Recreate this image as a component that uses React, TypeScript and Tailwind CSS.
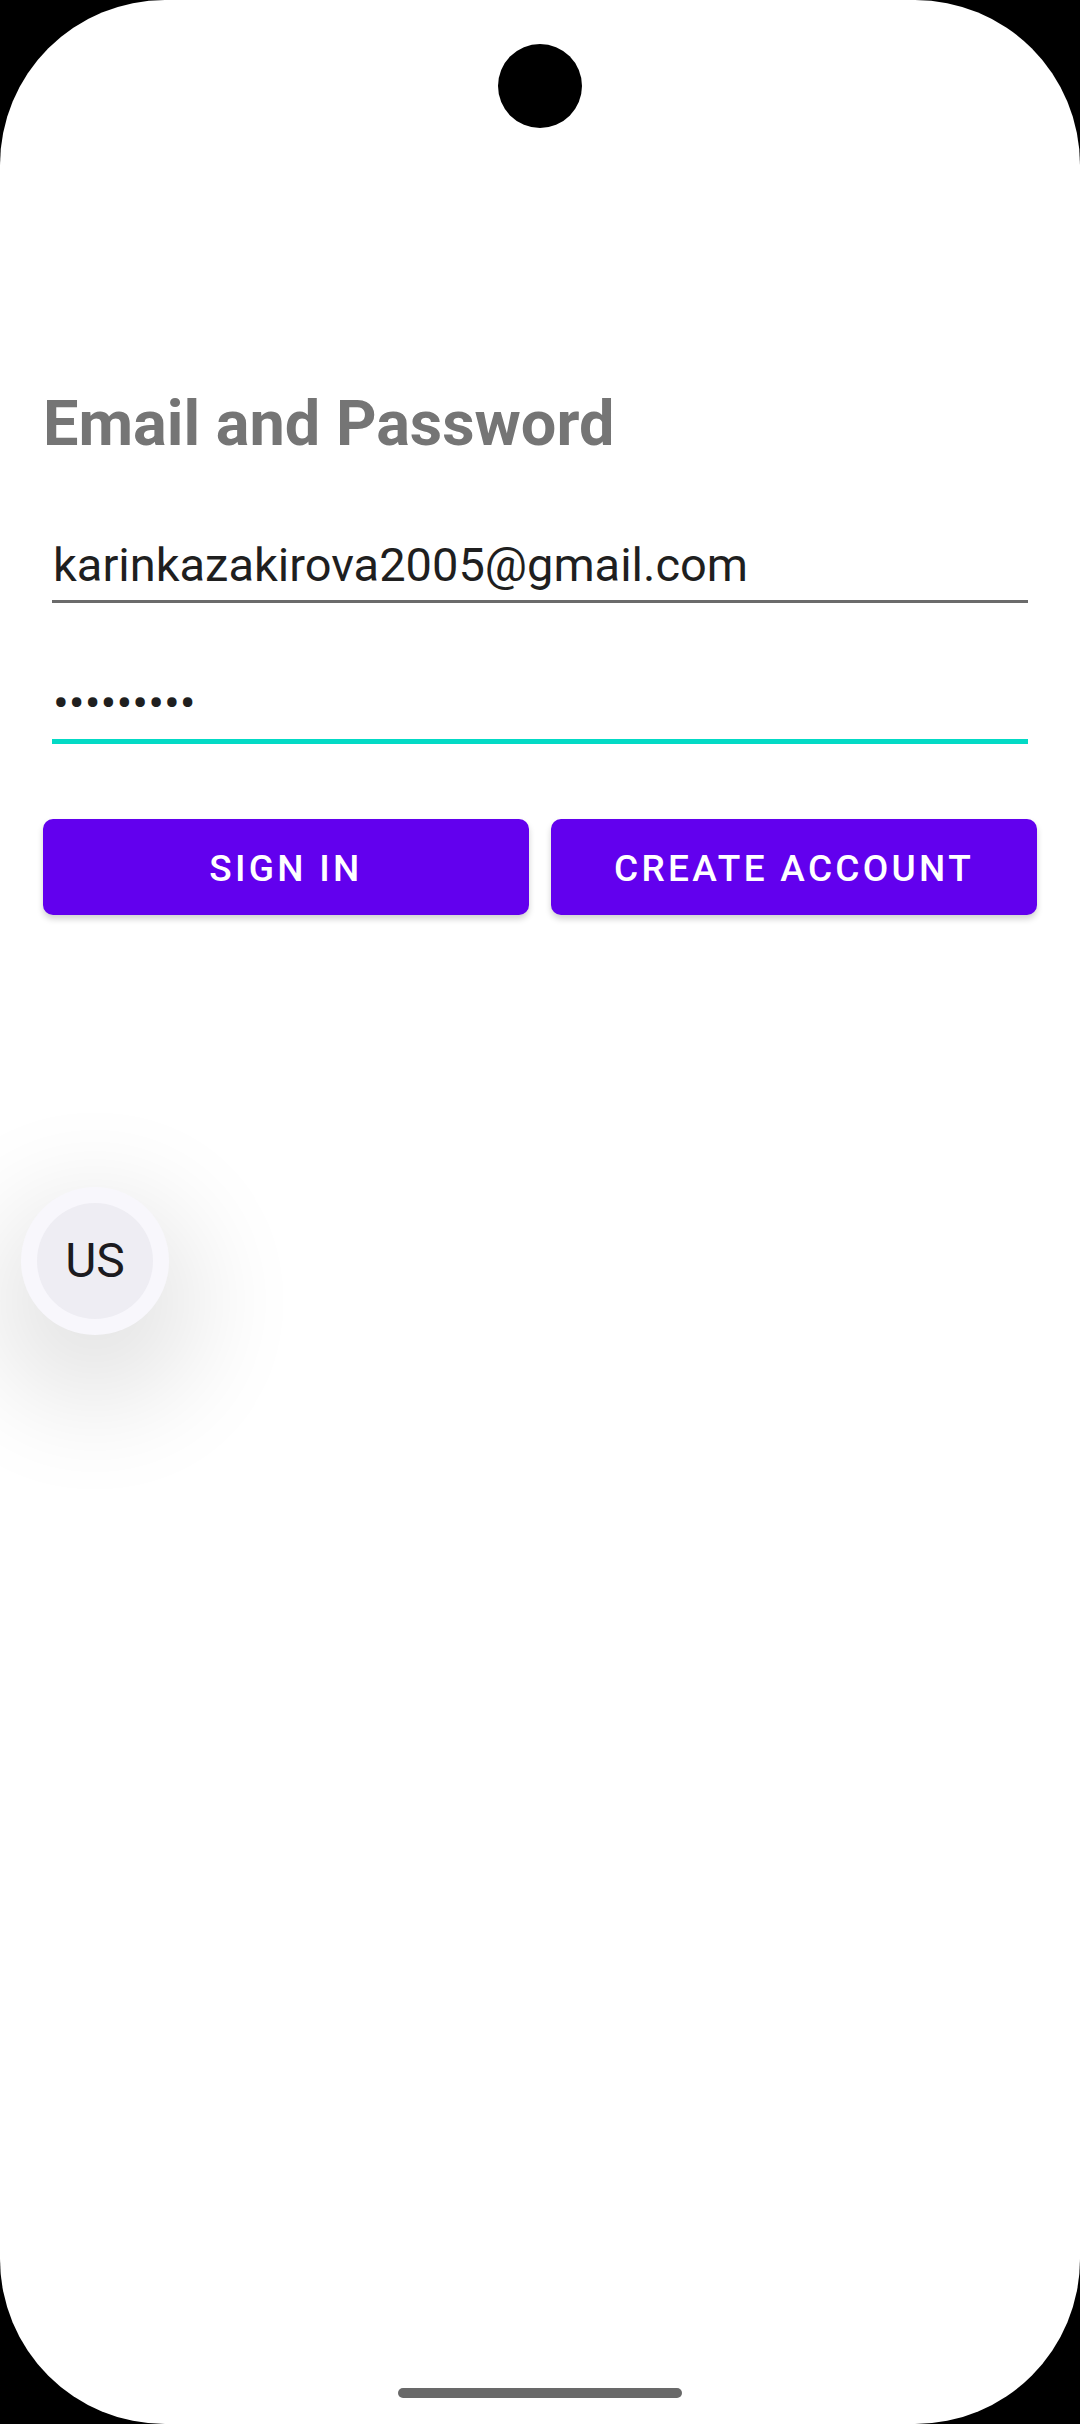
import React from "react";

function Field({ value, focused }: { value: string; focused?: boolean }) {
  return (
    <div
      className={
        focused
          ? "mx-[52px] pb-[9px] border-b-[5px] border-[#03dac5]"
          : "mx-[52px] pb-[8px] border-b-[3px] border-[#6b6b6b]"
      }
    >
      <div className="text-[47px] leading-[55px] text-[#1f1f1f] pl-[1px]">{value}</div>
    </div>
  );
}

function Button({ label }: { label: string }) {
  return (
    <button className="h-[96px] pt-[3px] rounded-[10px] bg-[#6200ee] text-white text-[37px] font-medium tracking-[3.3px] shadow-[0_4px_6px_rgba(0,0,0,0.18)]">
      {label}
    </button>
  );
}

export default function App() {
  return (
    <div className="bg-black w-[1080px] h-[2424px]" style={{ fontFamily: "Roboto, 'Noto Sans', sans-serif" }}>
      <div className="relative w-full h-full bg-white rounded-[165px] overflow-hidden">
        {/* camera cutout */}
        <div className="absolute left-[498px] top-[44px] w-[84px] h-[84px] rounded-full bg-black" />

        <div className="pt-[387px]">
          <h1 className="px-[43px] text-[63px] leading-[74px] font-bold text-[#757575]">
            Email and Password
          </h1>

          <div className="mt-[76px]">
            <Field value="karinkazakirova2005@gmail.com" />
          </div>
          <div className="mt-[72px]">
            <Field value="•••••••••" focused />
          </div>

          <div className="mt-[75px] grid grid-cols-2 gap-[22px] px-[43px]">
            <Button label="SIGN IN" />
            <Button label="CREATE ACCOUNT" />
          </div>
        </div>

        {/* floating language bubble */}
        <div className="absolute left-[21px] top-[1187px] w-[148px] h-[148px] rounded-full bg-[#f8f7fc] flex items-center justify-center shadow-[0_40px_110px_30px_rgba(0,0,0,0.11)]">
          <div className="w-[116px] h-[116px] rounded-full bg-[#eeedf3] flex items-center justify-center text-[48px] text-[#1c1b1f]">
            US
          </div>
        </div>

        {/* gesture handle */}
        <div className="absolute left-[398px] top-[2388px] w-[284px] h-[10px] rounded-full bg-[#696969]" />
      </div>
    </div>
  );
}
